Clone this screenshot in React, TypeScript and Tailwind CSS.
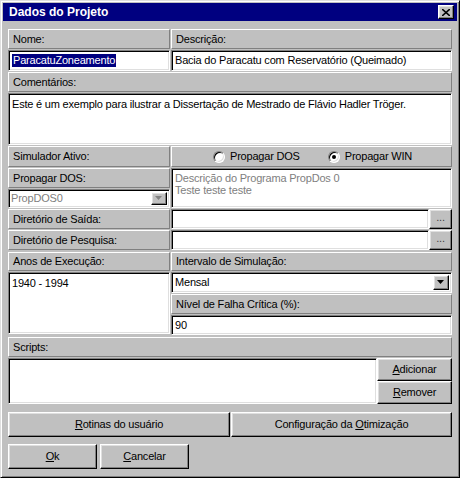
import React from "react";

const raised =
  "border border-t-white border-l-white border-b-[#808080] border-r-[#808080]";
const sunken =
  "border border-t-[#808080] border-l-[#808080] border-b-white border-r-white shadow-[inset_1px_1px_0_#000,inset_-1px_-1px_0_#dfdfdf]";
const button =
  "border border-t-white border-l-white border-b-black border-r-black shadow-[inset_-1px_-1px_0_#808080,inset_1px_1px_0_#dfdfdf] bg-[#c0c0c0] flex items-center justify-center";

function Label({ children, className = "" }: { children?: React.ReactNode; className?: string }) {
  return (
    <div className={`${raised} flex items-center pl-[4px] bg-[#c0c0c0] text-black ${className}`}>
      {children}
    </div>
  );
}

function Field({ children, className = "" }: { children?: React.ReactNode; className?: string }) {
  return (
    <div className={`${sunken} bg-white flex items-center pl-[3px] text-black ${className}`}>
      {children}
    </div>
  );
}

function Arrow({ disabled = false }: { disabled?: boolean }) {
  return (
    <div className={`${button} w-[16px] h-full shrink-0`}>
      <svg width="8" height="5" viewBox="0 0 8 5">
        <polygon points="0,0 7,0 3.5,4" fill={disabled ? "#808080" : "#000"} />
      </svg>
    </div>
  );
}

function Dots() {
  return <div className={`${button} w-[23px] h-full shrink-0 text-[#404040] pb-[3px]`}>...</div>;
}

function Radio({ checked, label }: { checked?: boolean; label: string }) {
  return (
    <div className="flex items-center gap-[5px]">
      <div className="w-[12px] h-[12px] rounded-full bg-white border border-t-[#808080] border-l-[#808080] border-b-white border-r-white shadow-[inset_1px_1px_0_#000,inset_-1px_-1px_0_#dfdfdf] flex items-center justify-center">
        {checked && <div className="w-[4px] h-[4px] rounded-full bg-black" />}
      </div>
      <span>{label}</span>
    </div>
  );
}

export default function App() {
  return (
    <div className="w-[460px] h-[478px] bg-[#c0c0c0] border border-t-[#dfdfdf] border-l-[#dfdfdf] border-b-black border-r-black shadow-[inset_1px_1px_0_#fff,inset_-1px_-1px_0_#808080] font-['Liberation_Sans',Arial,sans-serif] text-[11px] tracking-[-0.2px] leading-none text-black overflow-hidden">
      {/* Title bar */}
      <div className="mx-[2px] mt-[2px] h-[18px] bg-[#000080] flex items-center justify-between pl-[6px] pr-[3px]">
        <span className="text-white font-bold text-[12px] tracking-normal">Dados do Projeto</span>
        <div className={`${button} w-[16px] h-[14px]`}>
          <svg width="8" height="7" viewBox="0 0 8 7">
            <path d="M0 0 L8 7 M8 0 L0 7" stroke="#000" strokeWidth="1.6" />
          </svg>
        </div>
      </div>

      <div className="px-[7px] pt-[8px]">
        <div className="grid grid-cols-[162px_281px] gap-x-[1px]">
          <Label className="h-[20px]">Nome:</Label>
          <Label className="h-[20px]">Descrição:</Label>
          <Field className="h-[21px] mt-[1px]">
            <span className="bg-[#000080] text-white px-[1px] py-[1px]">ParacatuZoneamento</span>
          </Field>
          <Field className="h-[21px] mt-[1px]">Bacia do Paracatu com Reservatório (Queimado)</Field>
        </div>

        <Label className="h-[20px] mt-[1px]">Comentários:</Label>
        <div className={`${sunken} bg-white h-[52px] mt-[1px] pl-[3px] pt-[5px]`}>
          Este é um exemplo para ilustrar a Dissertação de Mestrado de Flávio Hadler Tröger.
        </div>

        <div className="grid grid-cols-[162px_281px] gap-x-[1px] mt-[1px]">
          <Label className="h-[21px]">Simulador Ativo:</Label>
          <Label className="h-[21px] pl-[41px] gap-[28px]">
            <Radio label="Propagar DOS" />
            <Radio checked label="Propagar WIN" />
          </Label>
        </div>

        <div className="grid grid-cols-[162px_281px] gap-x-[1px] mt-[1px]">
          <div className="flex flex-col gap-[1px]">
            <Label className="h-[20px]">Propagar DOS:</Label>
            <div className={`${sunken} bg-white h-[19px] flex items-center pl-[2px] pr-[2px] py-[2px] text-[#808080]`}>
              <span className="flex-1">PropDOS0</span>
              <Arrow disabled />
            </div>
          </div>
          <div className={`${sunken} bg-white h-[40px] pl-[3px] pt-[3px] text-[#808080] leading-[12px]`}>
            <div>Descrição do Programa PropDos 0</div>
            <div>Teste teste teste</div>
          </div>
        </div>

        <div className="grid grid-cols-[162px_281px] gap-x-[1px] mt-[1px]">
          <Label className="h-[20px]">Diretório de Saída:</Label>
          <div className="flex h-[20px]">
            <Field className="flex-1" />
            <Dots />
          </div>
        </div>
        <div className="grid grid-cols-[162px_281px] gap-x-[1px] mt-[1px]">
          <Label className="h-[20px]">Diretório de Pesquisa:</Label>
          <div className="flex h-[20px]">
            <Field className="flex-1" />
            <Dots />
          </div>
        </div>

        <div className="grid grid-cols-[162px_281px] gap-x-[1px] mt-[2px]">
          <Label className="h-[19px]">Anos de Execução:</Label>
          <Label className="h-[19px]">Intervalo de Simulação:</Label>
        </div>
        <div className="grid grid-cols-[162px_281px] gap-x-[1px] mt-[1px]">
          <div className={`${sunken} bg-white h-[62px] pl-[3px] pt-[5px]`}>1940 - 1994</div>
          <div className="flex flex-col gap-[1px]">
            <div className={`${sunken} bg-white h-[21px] flex items-center pl-[3px] pr-[2px] py-[2px]`}>
              <span className="flex-1">Mensal</span>
              <Arrow />
            </div>
            <Label className="h-[20px]">Nível de Falha Crítica (%):</Label>
            <Field className="h-[20px]">90</Field>
          </div>
        </div>

        <Label className="h-[20px] mt-[2px]">Scripts:</Label>
        <div className="flex mt-[1px] h-[46px]">
          <div className={`${sunken} bg-white flex-1`} />
          <div className="flex flex-col w-[75px]">
            <div className={`${button} h-[23px]`}>
              <span><span className="underline">A</span>dicionar</span>
            </div>
            <div className={`${button} h-[23px]`}>
              <span><span className="underline">R</span>emover</span>
            </div>
          </div>
        </div>

        <div className="grid grid-cols-[222px_221px] gap-x-[1px] mt-[8px]">
          <div className={`${button} h-[25px]`}>
            <span><span className="underline">R</span>otinas do usuário</span>
          </div>
          <div className={`${button} h-[25px]`}>
            <span>Configuração da <span className="underline">O</span>timização</span>
          </div>
        </div>

        <div className="flex gap-[3px] mt-[7px]">
          <div className={`${button} h-[25px] w-[89px]`}>
            <span><span className="underline">O</span>k</span>
          </div>
          <div className={`${button} h-[25px] w-[89px]`}>
            <span><span className="underline">C</span>ancelar</span>
          </div>
        </div>
      </div>
    </div>
  );
}
